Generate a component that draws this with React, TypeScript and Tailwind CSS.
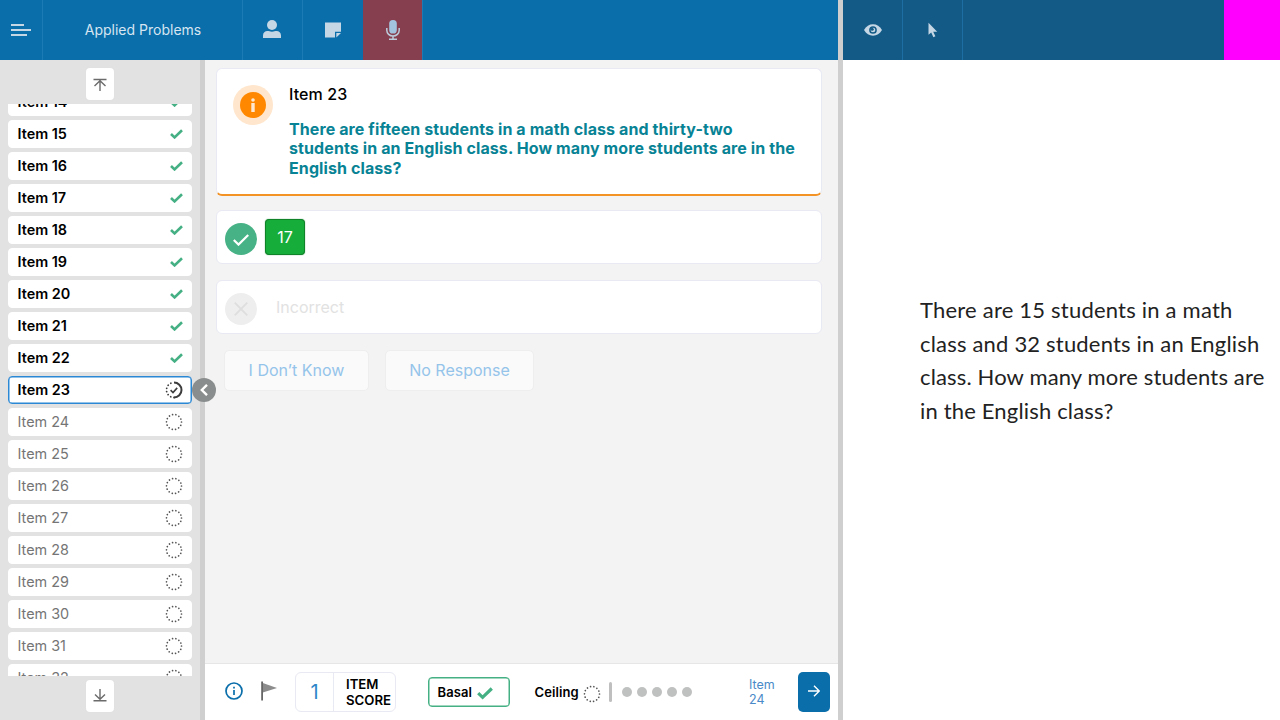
import React from "react";

const items = Array.from({ length: 19 }, (_, i) => 14 + i);
const CURRENT = 23;

function DottedCircle({ className = "size-[18px]" }: { className?: string }) {
  return (
    <svg viewBox="0 0 18 18" className={className} fill="none">
      <circle cx="9" cy="9" r="7.5" stroke="#555" strokeWidth="1.7" strokeLinecap="round" strokeDasharray="0.01 3.356" />
    </svg>
  );
}

function ProgressCheck() {
  return (
    <svg viewBox="0 0 18 18" className="size-[18px]" fill="none" stroke="#3c3c3c">
      <path d="M9 16.5A7.5 7.5 0 0 1 9 1.5" strokeWidth="1.8" strokeLinecap="round" strokeDasharray="0.01 3.35" />
      <path d="M9 1.5A7.5 7.5 0 0 1 9 16.5" strokeWidth="2" />
      <path d="M5.6 9.2l2.4 2.3 4.2-4.6" strokeWidth="1.6" />
    </svg>
  );
}

function BoldCheck({ className }: { className: string }) {
  return (
    <svg viewBox="0 0 16 13" className={className} fill="none" stroke="#45b084" strokeWidth="3.2">
      <path d="M1.200 6.200l4.400 4.200L14.800 1.500" />
    </svg>
  );
}

function ItemRow({ n }: { n: number }) {
  const done = n < CURRENT;
  const current = n === CURRENT;
  return (
    <div
      className={
        "flex h-7 shrink-0 items-center justify-between rounded-[4px] border bg-white pl-[8.5px] pr-2 text-[14.4px] " +
        (current
          ? "border-[#2b88d4] shadow-[inset_0_0_0_0.5px_#2b88d4] font-semibold text-black"
          : done
            ? "border-white font-semibold text-black"
            : "border-white font-normal text-[#757575]")
      }
    >
      <span>Item {n}</span>
      {current ? <ProgressCheck /> : done ? <BoldCheck className="h-[10.500px] w-[13px]" /> : <DottedCircle />}
    </div>
  );
}

function Header() {
  return (
    <header className="flex h-[60px] shrink-0 bg-[#0a6eaa] text-[#c5d6e5]">
      <div className="flex w-[43px] items-center border-r border-[#1c7bb5] pl-[11px]">
        <svg viewBox="0 0 20 12" className="h-3 w-5" stroke="currentColor" strokeWidth="2">
          <path d="M0 1h13M0 6h20M0 11h16" />
        </svg>
      </div>
      <div className="flex w-[200px] items-center justify-center border-r border-[#1c7bb5] pl-px text-[14px] text-[#d6e5f1]">
        <span className="mb-px">Applied Problems</span>
      </div>
      <div className="flex w-[60px] items-center justify-center border-r border-[#1c7bb5]">
        <svg viewBox="0 0 18 18" className="mb-[2px] mr-px size-[18px]" fill="currentColor">
          <circle cx="9" cy="5" r="5" />
          <path d="M0 18v-2.6C0 12.6 2 11 4.4 11c1.700 0 2.400.7 4.600.7s2.900-.7 4.600-.7C16 11 18 12.600 18 15.400V18z" />
        </svg>
      </div>
      <div className="flex w-[60px] items-center justify-center">
        <svg viewBox="0 0 16 16" className="size-4" fill="currentColor">
          <path d="M0 .5h16V9.800h-6V15.500H0z" />
          <path d="M11.300 11H16l-4.700 4.500z" />
        </svg>
      </div>
      <div className="flex w-[60px] items-center justify-center border-r border-[#1c7bb5] bg-[#863f4f] bg-clip-padding">
        <svg viewBox="0 0 14 20" className="h-5 w-[14px]" fill="none" stroke="#bcccdc" strokeWidth="1.5">
          <rect x="3.200" y="0" width="7.600" height="13.500" rx="3.600" fill="#a3c4de" stroke="none" />
          <path d="M.8 8v2.300a6.200 5.800 0 0 0 12.400 0V8M7 16v3M3 19.200h8" />
        </svg>
      </div>
    </header>
  );
}

function Sidebar() {
  return (
    <aside className="flex w-[205px] shrink-0 flex-col border-r-[5px] border-[#cfcfcf] bg-[#e2e2e2]">
      <div className="flex h-11 shrink-0 items-center justify-center pt-1">
        <button className="flex h-8 w-7 items-center justify-center rounded-[4px] bg-white shadow-[0_0_1px_#ddd]">
          <svg viewBox="0 0 14 14" className="mt-[2px] size-[14px]" fill="none" stroke="#6b6b6b" strokeWidth="1.4">
            <path d="M.5 1.500h13M7 13V3M1.500 8L7 2.800 12.500 8" />
          </svg>
        </button>
      </div>
      <div className="flex h-[572px] shrink-0 flex-col overflow-hidden px-2">
        <div className="-mt-4 flex flex-col gap-1">
          {items.map((n) => (
            <ItemRow key={n} n={n} />
          ))}
        </div>
      </div>
      <div className="flex h-11 shrink-0 items-center justify-center pb-1">
        <button className="flex h-8 w-7 items-center justify-center rounded-[4px] bg-white shadow-[0_0_1px_#ddd]">
          <svg viewBox="0 0 14 14" className="mb-[2px] size-[14px]" fill="none" stroke="#6b6b6b" strokeWidth="1.4">
            <path d="M.5 12.800h13M7 1v10M2 6.400L7 11.200 12 6.400" />
          </svg>
        </button>
      </div>
    </aside>
  );
}

function Question() {
  return (
    <section className="flex h-[128px] w-[606px] rounded-[6px] border border-b-2 border-[#e8e9f3] border-b-[#f39325] bg-white pl-4 pt-[15.500px]">
      <div className="flex size-10 items-center justify-center rounded-full bg-[#ffe6cc]">
        <div className="flex size-[26px] items-center justify-center rounded-full bg-[#ff8800]">
          <svg viewBox="0 0 6 14" className="h-[14px] w-[6px]" fill="#ffe8d0">
            <circle cx="3" cy="2" r="1.800" />
            <rect x="1.300" y="5" width="3.400" height="9" />
          </svg>
        </div>
      </div>
      <div className="mt-[0.500px] pl-4">
        <h1 className="text-[16px] leading-[19px] font-medium tracking-[0.100px] text-black">Item 23</h1>
        <p className="mt-[15.500px] whitespace-nowrap text-[16px] leading-[19.5px] font-bold tracking-[0.100px] text-[#088395]">
          There are fifteen students in a math class and thirty-two
          <br />
          students in an English class. How many more students are in the
          <br />
          English class?
        </p>
      </div>
    </section>
  );
}

function Responses() {
  return (
    <>
      <section className="mt-[14px] flex h-[54px] w-[606px] rounded-[6px] border border-[#e8e9f3] bg-white pl-2 pt-2">
        <div className="mt-1 flex size-8 items-center justify-center rounded-full bg-[#47b285]">
          <svg viewBox="0 0 16 12" className="mt-[2px] h-3 w-4" fill="none" stroke="white" strokeWidth="2.200">
            <path d="M.8 6l4.700 4.600L15.200 1" />
          </svg>
        </div>
        <button className="ml-2 flex h-9 w-10 items-center justify-center rounded-[4px] border border-[#108329] bg-[#17ad3b] text-[16px] text-white shadow-[0_0_1px_#108329]">
          17
        </button>
      </section>
      <section className="mt-4 flex h-[54px] w-[606px] rounded-[6px] border border-[#e8e9f3] bg-white pl-2 pt-3">
        <div className="flex size-8 items-center justify-center rounded-full bg-[#eeeeee]">
          <svg viewBox="0 0 14 14" className="size-[14px]" stroke="#dedede" strokeWidth="1.8">
            <path d="M.7 .7l12.600 12.600M13.300 .7L.7 13.300" />
          </svg>
        </div>
        <span className="ml-[19px] mt-1 text-[16px] leading-5 text-[#e2e2e2]">Incorrect</span>
      </section>
      <div className="ml-2 mt-[15.500px] flex gap-4 text-[16px] text-[#95c4ea]">
        <button className="h-[41px] w-[145px] rounded-[5px] border border-[#eeeeee] bg-[#fafafa]">I Don’t Know</button>
        <button className="h-[41px] w-[149px] rounded-[5px] border border-[#eeeeee] bg-[#fafafa]">No Response</button>
      </div>
    </>
  );
}

function Footer() {
  return (
    <footer className="flex h-[57px] shrink-0 items-center border-t border-[#e6e6e6] bg-white">
      <svg viewBox="0 0 18 18" className="mb-[3px] ml-5 size-[18px]" fill="none" stroke="#0a6eaa" strokeWidth="1.7">
        <circle cx="9" cy="9" r="8" />
        <path d="M9 8v5M9 4.800v1.700" />
      </svg>
      <svg viewBox="0 0 16 20" className="mb-[3px] ml-[18px] h-5 w-4">
        <path d="M1.800 2L16 7 1.800 11.500z" fill="#8c8c8c" />
        <path d="M.2 .5h1.800v19H.2z" fill="#666" />
      </svg>
      <div className="ml-[18px] flex h-10 w-[101px] rounded-[6px] border border-[#e8e9f3]">
        <div className="flex w-[38px] items-center justify-center border-r border-[#e8e9f3] text-[20px] text-[#2d86c8]">1</div>
        <div className="pl-3 pt-[3px] text-[13.200px] leading-4 font-semibold text-black">
          ITEM
          <br />
          SCORE
        </div>
      </div>
      <div className="ml-8 flex h-[30px] w-[82px] items-center rounded-[4px] border-[1.500px] border-[#45b084] pl-[8.500px] text-[13px] font-semibold text-black shadow-[inset_0_0_0_0.500px_#45b084]">
        <span className="mt-px tracking-[0.100px]">Basal</span>
        <BoldCheck className="ml-[5px] mt-[3px] h-[13px] w-4" />
      </div>
      <div className="ml-[24.500px] flex items-center text-[13px] font-semibold text-black">
        <span className="mt-px tracking-[0.100px]">Ceiling</span>
        <DottedCircle className="ml-1 mt-[3px] size-[18px]" />
      </div>
      <div className="ml-2 h-5 w-[3px] rounded-full bg-[#bfbfbf]" />
      <div className="ml-[10.500px] flex gap-[5px]">
        {[0, 1, 2, 3, 4].map((i) => (
          <div key={i} className="size-[10px] rounded-full bg-[#bfc1c0]" />
        ))}
      </div>
      <div className="ml-auto w-[49px] text-[12.500px] leading-[15px] text-[#4b8ac8]">
        Item
        <br />
        24
      </div>
      <button className="mr-2 flex h-10 w-8 items-center justify-center rounded-[5px] bg-[#0a6eaa]">
        <svg viewBox="0 0 12 12" className="mb-[3px] size-3" fill="none" stroke="white" strokeWidth="1.4">
          <path d="M0 6h11M6 .8L11.200 6 6 11.200" />
        </svg>
      </button>
    </footer>
  );
}

function Stimulus() {
  return (
    <div className="flex min-w-0 flex-1 flex-col bg-white">
      <header className="flex h-[60px] shrink-0 bg-[#135b86] text-[#c5d6e5]">
        <div className="flex w-[60px] items-center justify-center border-r border-[#1d6fa3]">
          <svg viewBox="0 0 18 12" className="h-3 w-[18px]">
            <path d="M0 6C2.200 2.300 5.200.3 9 .3S15.800 2.300 18 6c-2.200 3.700-5.200 5.700-9 5.700S2.200 9.700 0 6z" fill="currentColor" />
            <circle cx="9" cy="6" r="3.100" fill="none" stroke="#135b86" strokeWidth="1.500" />
            <circle cx="8.200" cy="5.200" r="1.500" fill="#135b86" />
          </svg>
        </div>
        <div className="flex w-[60px] items-center justify-center border-r border-[#1d6fa3]">
          <svg viewBox="0 0 10 16" className="h-[16px] w-[10px]" fill="currentColor">
            <path d="M.5 .8v12l2.700-2.400 2.200 4.800 2-.9-2.200-4.500h4z" />
          </svg>
        </div>
        <div className="ml-auto w-14 bg-[#ff00ff]" />
      </header>
      <div className="whitespace-nowrap pl-[77px] pt-[233px] font-['Lato',sans-serif] text-[22px] leading-[33.600px] text-[#222]">
        <div className="tracking-[0.210px]">There are 15 students in a math</div>
        <div className="tracking-[0.190px]">class and 32 students in an English</div>
        <div className="tracking-[0.150px]">class. How many more students are</div>
        <div className="tracking-[0.170px]">in the English class?</div>
      </div>
    </div>
  );
}

export default function App() {
  return (
    <div className="relative flex h-[720px] w-[1280px] overflow-hidden bg-white font-['Inter',sans-serif]">
      <div className="flex w-[838px] shrink-0 flex-col">
        <Header />
        <div className="flex min-h-0 flex-1">
          <Sidebar />
          <div className="flex min-w-0 flex-1 flex-col">
            <main className="flex-1 bg-[#f3f3f3] pl-[11px] pt-2">
              <Question />
              <Responses />
            </main>
            <Footer />
          </div>
        </div>
      </div>
      <div className="w-[5px] shrink-0 bg-[#cfcfcf]" />
      <Stimulus />
      {/* Collapse handle overlapping the sidebar edge */}
      <button className="absolute left-[192px] top-[377.500px] flex size-6 items-center justify-center rounded-full bg-[#8a8d8d]">
        <svg viewBox="0 0 8 12" className="mr-px h-3 w-2" fill="none" stroke="white" strokeWidth="2.400">
          <path d="M7 .8L1.800 6 7 11.200" />
        </svg>
      </button>
    </div>
  );
}
